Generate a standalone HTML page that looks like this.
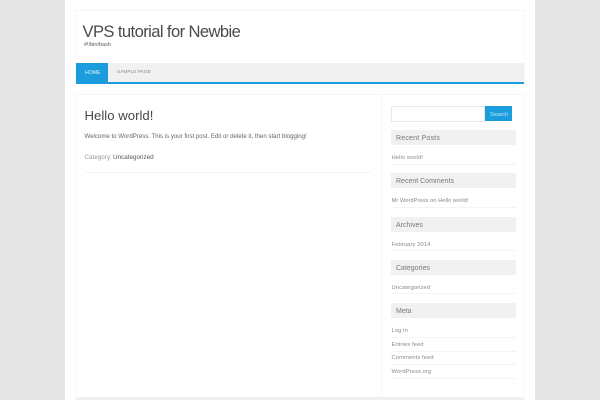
<!DOCTYPE html>
<html><head><meta charset="utf-8"><style>
html,body{margin:0;padding:0;width:600px;height:400px;overflow:hidden;background:#e6e6e6}
body{position:relative;font-family:"Liberation Sans",sans-serif;color:#555}
div{position:absolute;box-sizing:border-box}
.t{white-space:nowrap;line-height:12px}
.l{left:391px;width:125px;height:1px;background:#f4f4f4}
.h{left:391px;width:125px;height:15px;background:#f1f1f1}
.ht{left:396px;font-size:7px;color:#777}
.s{left:391.5px;font-size:5.8px;color:#8a8a8a;letter-spacing:.1px}
</style></head><body>
<div style="left:65px;top:0;width:470px;height:400px;background:#fff"></div>
<div style="left:75px;top:10px;width:450px;height:74px;border:1px solid #f6f6f6;border-bottom:none"></div>
<div class="t" style="left:82.5px;top:22px;font-size:16.6px;line-height:20px;color:#4a4a4a;letter-spacing:-.6px">VPS tutorial for Newbie</div>
<div class="t" style="left:84px;top:39px;font-size:5.5px;color:#555">#!/bin/bash</div>
<div style="left:76px;top:63px;width:448px;height:19px;background:#f1f1f1"></div>
<div style="left:76px;top:82px;width:448px;height:2px;background:#1b9ddd"></div>
<div style="left:76px;top:63px;width:32px;height:20px;background:#1b9ddd"></div>
<div class="t" style="left:85px;top:66.5px;font-size:5.2px;color:#e0f2fb">HOME</div>
<div class="t" style="left:117px;top:66.5px;font-size:4.8px;color:#888">SAMPLE PAGE</div>
<div style="left:75px;top:94px;width:450px;height:306px;border:1px solid #f6f6f6;border-bottom:3px solid #f0f0f0"></div>
<div style="left:381px;top:95px;width:1px;height:302px;background:#f7f7f7"></div>
<div class="t" style="left:84.5px;top:108px;font-size:13.2px;line-height:16px;color:#484848">Hello world!</div>
<div class="t" style="left:84.5px;top:131px;font-size:6.1px;color:#666">Welcome to WordPress. This is your first post. Edit or delete it, then start blogging!</div>
<div class="t" style="left:84.5px;top:152px;font-size:6.3px;color:#999">Category:</div>
<div class="t" style="left:113px;top:152px;font-size:6.3px;color:#555">Uncategorized</div>
<div style="left:85px;top:172px;width:286px;height:1px;background:#f4f4f4"></div>
<div style="left:391px;top:106px;width:94px;height:16px;border:1px solid #e8e8e8;background:#fff"></div>
<div style="left:485px;top:106px;width:27px;height:15px;background:#1b9ddd"></div>
<div class="t" style="left:490px;top:109px;font-size:5.8px;color:#bfe5f7">Search</div>
<div class="h" style="top:130px"></div><div class="t ht" style="top:133px;letter-spacing:.2px">Recent Posts</div>
<div class="t s" style="top:152px">Hello world!</div><div class="l" style="top:164px"></div>
<div class="h" style="top:173px"></div><div class="t ht" style="top:176px">Recent Comments</div>
<div class="t s" style="top:195px;letter-spacing:0">Mr WordPress on Hello world!</div><div class="l" style="top:207px"></div>
<div class="h" style="top:217px"></div><div class="t ht" style="top:220px">Archives</div>
<div class="t s" style="top:238.5px">February 2014</div><div class="l" style="top:250px"></div>
<div class="h" style="top:260px"></div><div class="t ht" style="top:263px">Categories</div>
<div class="t s" style="top:281.5px">Uncategorized</div><div class="l" style="top:293px"></div>
<div class="h" style="top:303px"></div><div class="t ht" style="top:306px">Meta</div>
<div class="t s" style="top:325px">Log in</div><div class="l" style="top:337px"></div>
<div class="t s" style="top:338.5px">Entries feed</div><div class="l" style="top:351px"></div>
<div class="t s" style="top:352px">Comments feed</div><div class="l" style="top:364px"></div>
<div class="t s" style="top:366px">WordPress.org</div><div class="l" style="top:378px"></div>
</body></html>
